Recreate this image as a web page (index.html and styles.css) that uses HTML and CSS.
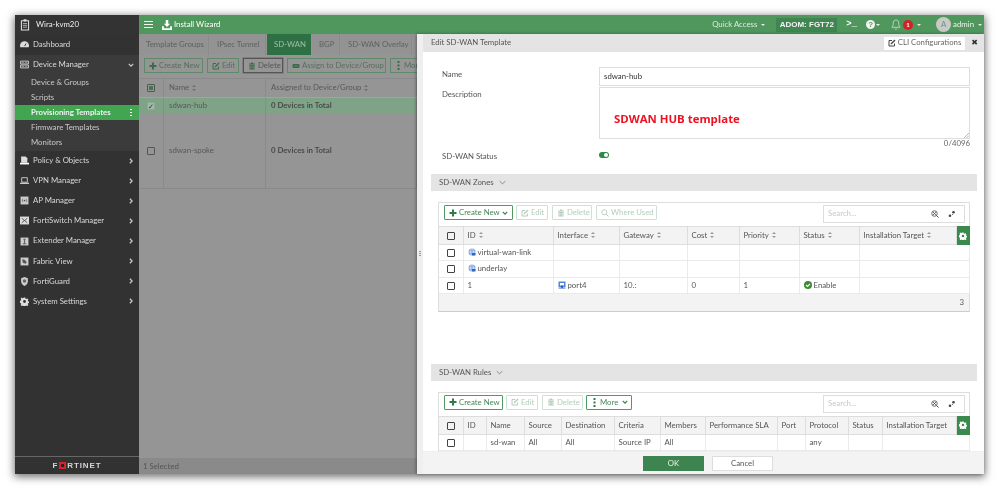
FILE: index.html
```html
<!DOCTYPE html>
<html lang="en">
<head>
<meta charset="utf-8">
<title>Edit SD-WAN Template</title>
<link rel="stylesheet" href="styles.css">
</head>
<body>
<svg class="defs" width="0" height="0" aria-hidden="true">
  <symbol id="gear" viewBox="0 0 16 16"><path fill="currentColor" fill-rule="evenodd" d="M6.600 1h2.800l.4 2 1.300.6 1.800-1.100 2 2-1.100 1.800.6 1.300 2 .4v2.800l-2 .4-.6 1.300 1.100 1.800-2 2-1.800-1.100-1.300.6-.4 2H6.600l-.4-2-1.300-.6-1.800 1.100-2-2 1.100-1.800-.6-1.300-2-.4V6.600l2-.4.6-1.300-1.100-1.800 2-2 1.800 1.100 1.300-.6zM8 5.500a2.500 2.500 0 1 0 0 5 2.500 2.500 0 0 0 0-5z"/></symbol>
  <symbol id="edit" viewBox="0 0 16 16"><path fill="none" stroke="currentColor" stroke-width="2" d="M13 9v5H2V3h6"/><path fill="currentColor" d="M6 8l7-7 2 2-7 7-3 1z"/></symbol>
  <symbol id="trash" viewBox="0 0 16 16"><path fill="currentColor" fill-rule="evenodd" d="M2 3h4V1h4v2h4v2H2zM3 6h10v9H3zm2 2v5h1V8zm2.500 0v5h1V8zM10 8v5h1V8z"/></symbol>
  <symbol id="plus" viewBox="0 0 16 16"><path fill="currentColor" d="M6 1h4v5h5v4h-5v5H6v-5H1V6h5z"/></symbol>
  <symbol id="search" viewBox="0 0 16 16"><circle cx="6.500" cy="6.500" r="5" fill="none" stroke="currentColor" stroke-width="1.800"/><path stroke="currentColor" stroke-width="2" d="M10 10l5 5"/></symbol>
  <symbol id="searchx" viewBox="0 0 16 16"><circle cx="7" cy="7" r="5.500" fill="none" stroke="currentColor" stroke-width="1.600"/><path stroke="currentColor" stroke-width="2" d="M11 11l4 4M4.500 4.500l5 5M9.500 4.500l-5 5"/></symbol>
  <symbol id="dots" viewBox="0 0 16 16"><circle cx="11" cy="4.500" r="2.600" fill="currentColor"/><circle cx="4" cy="11.500" r="2.600" fill="currentColor"/><circle cx="9" cy="9" r="1" fill="currentColor"/></symbol>
  <symbol id="globe" viewBox="0 0 16 16"><circle cx="8" cy="8" r="7" fill="#7fa6e0"/><path fill="none" stroke="#fff" d="M1 8h14M8 1c-4 4-4 10 0 14M8 1c4 4 4 10 0 14"/><path fill="#2d66c4" d="M8 10h7v5H8z"/></symbol>
  <symbol id="port" viewBox="0 0 16 16"><rect x="1" y="1" width="14" height="12" fill="#4f86d9"/><path fill="#fff" d="M4 4h8v5H4z"/><path fill="#2d66c4" d="M6 9h4v6H6zM1 14h14v1H1z"/></symbol>
  <symbol id="check" viewBox="0 0 16 16"><circle cx="8" cy="8" r="8" fill="#3f8a33"/><path fill="none" stroke="#fff" stroke-width="2.400" d="M4 8l3 3 5-5"/></symbol>
  <symbol id="pill" viewBox="0 0 16 16"><rect x="1" y="4" width="14" height="8" rx="2" fill="currentColor"/><path stroke="#959595" d="M4 8h8"/></symbol>
  <symbol id="kebab" viewBox="0 0 7 9"><path fill="currentColor" d="M2.500 0h2v2h-2zM2.500 3.500h2v2h-2zM2.500 7h2v2h-2z"/></symbol>
  <symbol id="right" viewBox="0 0 8 8"><path fill="none" stroke="#ccc" stroke-width="1.600" d="M2.500 1l3 3-3 3"/></symbol>
  <symbol id="down" viewBox="0 0 8 8"><path fill="none" stroke="currentColor" stroke-width="1.600" d="M1 2.500l3 3 3-3"/></symbol>
</svg>

<div class="window">
  <aside class="sidebar">
    <div class="adom-head">
      <svg class="doc" viewBox="0 0 14 16"><path fill="none" stroke="#ddd" stroke-width="1.500" d="M2 2h10v13H2z"/><path stroke="#ddd" d="M4 6h6M4 8.500h6M4 11h6"/><path fill="#ddd" d="M5 0h4v3H5z"/></svg>
      <span>Wira-kvm20</span>
    </div>
    <nav class="nav">
      <div class="nav-item">
        <svg class="ico" viewBox="0 0 16 16"><path fill="#ddd" d="M8 2a8 8 0 0 0-8 8c0 2 1 3 1 3h14s1-1 1-3a8 8 0 0 0-8-8z"/><path stroke="#333" stroke-width="1.600" d="M8 11l3-5"/></svg>
        <span>Dashboard</span>
      </div>
      <div class="group">
        <div class="nav-item">
          <svg class="ico" viewBox="0 0 16 16"><path fill="none" stroke="#ddd" stroke-width="1.500" d="M1 2h14v5H1zM1 9h14v5H1z"/><path fill="#ddd" d="M3 4h4v1H3zM9 4h4v1H9zM3 11h4v1H3zM9 11h4v1H9z"/></svg>
          <span>Device Manager</span>
          <svg class="chev down"><use href="#down"/></svg>
        </div>
        <div class="sub">Device &amp; Groups</div>
        <div class="sub">Scripts</div>
        <div class="sub active"><span>Provisioning Templates</span><i class="kebab"></i></div>
        <div class="sub">Firmware Templates</div>
        <div class="sub">Monitors</div>
      </div>
      <div class="nav-item">
        <svg class="ico" viewBox="0 0 16 16"><path fill="#ddd" d="M2 1h8l3 3v8H2z"/><path fill="#fff" d="M0 12h16v3H0z"/></svg>
        <span>Policy &amp; Objects</span>
        <svg class="chev"><use href="#right"/></svg>
      </div>
      <div class="nav-item">
        <svg class="ico" viewBox="0 0 16 16"><path fill="none" stroke="#ddd" stroke-width="1.500" d="M3 3h10v8H3z"/><path fill="#ddd" d="M0 12h16v2H0z"/></svg>
        <span>VPN Manager</span>
        <svg class="chev"><use href="#right"/></svg>
      </div>
      <div class="nav-item">
        <svg class="ico" viewBox="0 0 16 16"><rect x="1" y="1" width="14" height="14" fill="#ccc"/><path fill="none" stroke="#444" d="M5 5c-1 2-1 4 0 6M11 5c1 2 1 4 0 6"/><circle cx="8" cy="8" r="1.500" fill="#444"/></svg>
        <span>AP Manager</span>
        <svg class="chev"><use href="#right"/></svg>
      </div>
      <div class="nav-item">
        <svg class="ico" viewBox="0 0 16 16"><rect x="0" y="1" width="16" height="14" fill="#ddd"/><path stroke="#444" stroke-width="1.500" d="M3 4l10 8M13 4L3 12"/></svg>
        <span>FortiSwitch Manager</span>
        <svg class="chev"><use href="#right"/></svg>
      </div>
      <div class="nav-item">
        <svg class="ico" viewBox="0 0 16 16"><rect x="1" y="1" width="14" height="14" fill="#ccc"/><path fill="#666" d="M6 3h4v2H6zM7 5h2v6H7zM5 11h6v2H5z"/></svg>
        <span>Extender Manager</span>
        <svg class="chev"><use href="#right"/></svg>
      </div>
      <div class="nav-item">
        <svg class="ico" viewBox="0 0 16 16"><rect x="1" y="1" width="14" height="14" fill="#ccc"/><path fill="#555" d="M4 4l4 1 4 4-2 3-5-2z"/></svg>
        <span>Fabric View</span>
        <svg class="chev"><use href="#right"/></svg>
      </div>
      <div class="nav-item">
        <svg class="ico" viewBox="0 0 16 16"><path fill="#ccc" d="M8 0l6 2v6c0 4-3 6-6 8-3-2-6-4-6-8V2z"/><circle cx="8" cy="7" r="3" fill="#666"/></svg>
        <span>FortiGuard</span>
        <svg class="chev"><use href="#right"/></svg>
      </div>
      <div class="nav-item">
        <svg class="ico gearico"><use href="#gear"/></svg>
        <span>System Settings</span>
        <svg class="chev"><use href="#right"/></svg>
      </div>
    </nav>
    <div class="brand"><span>F</span><b class="brand-o"></b><span>RTINET</span></div>
  </aside>

  <div class="content">
    <header class="topbar">
      <span class="burger"><i></i><i></i><i></i></span>
      <span class="wizard">
        <svg viewBox="0 0 16 16"><path fill="#fff" d="M6 0h4v6h3L8 11 3 6h3zM0 10h3v3h10v-3h3v6H0z"/></svg>
        Install Wizard
      </span>
      <span class="top-right">
        <span class="quick">Quick Access <i class="caret"></i></span>
        <span class="adom">ADOM: FGT72</span>
        <span class="prompt">&gt;_</span>
        <span class="help"><b>?</b><i class="caret"></i></span>
        <span class="bell">
          <svg viewBox="0 0 14 16"><path fill="none" stroke="#e8f0e8" d="M7 1.500c-3 0-4 2-4 5 0 3-1 4-2 5.500h12c-1-1.500-2-2.500-2-5.500 0-3-1-5-4-5zM5.500 14c.5 1.300 2.500 1.300 3 0"/></svg>
          <b class="badge">1</b><i class="caret"></i>
        </span>
        <span class="user"><b class="avatar">A</b>admin<i class="caret"></i></span>
      </span>
    </header>

    <div class="tabs">
      <span class="tab">Template Groups</span>
      <span class="tab">IPsec Tunnel</span>
      <span class="tab on">SD-WAN</span>
      <span class="tab">BGP</span>
      <span class="tab">SD-WAN Overlay</span>
    </div>
    <div class="main-tools">
      <span class="dbtn"><svg><use href="#plus"/></svg>Create New</span>
      <span class="dbtn"><svg><use href="#edit"/></svg>Edit</span>
      <span class="dbtn dark"><svg><use href="#trash"/></svg>Delete</span>
      <span class="dbtn"><svg><use href="#pill"/></svg>Assign to Device/Group</span>
      <span class="dbtn"><svg class="vdots"><use href="#kebab"/></svg>More</span>
    </div>
    <div class="main-grid">
      <div class="mrow mhead">
        <span class="mc"><i class="cb sel"></i></span>
        <span class="mc">Name<i class="sort"></i></span>
        <span class="mc">Assigned to Device/Group<i class="sort"></i></span>
      </div>
      <div class="mrow hub">
        <span class="mc"><i class="cb tick">✓</i></span>
        <span class="mc">sdwan-hub</span>
        <span class="mc strong">0 Devices in Total</span>
      </div>
      <div class="mrow spoke">
        <span class="mc"><i class="cb"></i></span>
        <span class="mc">sdwan-spoke</span>
        <span class="mc strong">0 Devices in Total</span>
      </div>
    </div>
    <div class="main-foot">1 Selected</div>

    <section class="panel">
      <div class="splitter"><i></i></div>
      <div class="panel-in">
        <div class="panel-head">
          <span>Edit SD-WAN Template</span>
          <span class="cli"><svg><use href="#edit"/></svg>CLI Configurations</span>
          <span class="close">✖</span>
        </div>
        <div class="panel-body">
          <div class="field f-name"><label>Name</label><div class="input">sdwan-hub</div></div>
          <div class="field f-desc"><label>Description</label><div class="input area"><span class="hub-note">SDWAN HUB template</span><svg class="grip" viewBox="0 0 6 6"><path stroke="#aaa" d="M0 6l6-6M3 6l3-3"/></svg></div></div>
          <div class="count">0/4096</div>
          <div class="field f-status"><label>SD-WAN Status</label><i class="toggle"></i></div>

          <div class="sect">SD-WAN Zones <svg viewBox="0 0 10 6"><path fill="none" stroke="#666" d="M1 1l4 4 4-4"/></svg></div>
          <div class="tbox zones">
            <div class="tbar">
              <span class="btn"><svg class="gr"><use href="#plus"/></svg>Create New <svg class="cv"><use href="#down"/></svg></span>
              <span class="btn off"><svg><use href="#edit"/></svg>Edit</span>
              <span class="btn off"><svg><use href="#trash"/></svg>Delete</span>
              <span class="btn off"><svg><use href="#search"/></svg>Where Used</span>
              <span class="sbox"><span>Search...</span><svg><use href="#searchx"/></svg><svg><use href="#dots"/></svg></span>
            </div>
            <table class="t tz">
              <colgroup><col class="c1"><col class="c2"><col class="c3"><col class="c4"><col class="c5"><col class="c6"><col class="c7"><col class="c8"><col class="c9"></colgroup>
              <thead><tr><th><i class="cb"></i></th><th>ID<i class="sort"></i></th><th>Interface<i class="sort"></i></th><th>Gateway<i class="sort"></i></th><th>Cost<i class="sort"></i></th><th>Priority<i class="sort"></i></th><th>Status<i class="sort"></i></th><th>Installation Target<i class="sort"></i></th><th class="gearcell"><svg><use href="#gear"/></svg></th></tr></thead>
              <tbody>
                <tr><td><i class="cb"></i></td><td><svg class="ri"><use href="#globe"/></svg>virtual-wan-link</td><td></td><td></td><td></td><td></td><td></td><td colspan="2"></td></tr>
                <tr><td><i class="cb"></i></td><td><svg class="ri"><use href="#globe"/></svg>underlay</td><td></td><td></td><td></td><td></td><td></td><td colspan="2"></td></tr>
                <tr><td><i class="cb"></i></td><td>1</td><td><svg class="ri"><use href="#port"/></svg>port4</td><td>10.:</td><td>0</td><td>1</td><td><svg class="ri"><use href="#check"/></svg>Enable</td><td colspan="2"></td></tr>
              </tbody>
            </table>
            <div class="tfoot">3</div>
          </div>

          <div class="sect rules-sect">SD-WAN Rules <svg viewBox="0 0 10 6"><path fill="none" stroke="#666" d="M1 1l4 4 4-4"/></svg></div>
          <div class="tbox rules">
            <div class="tbar">
              <span class="btn"><svg class="gr"><use href="#plus"/></svg>Create New</span>
              <span class="btn off"><svg><use href="#edit"/></svg>Edit</span>
              <span class="btn off"><svg><use href="#trash"/></svg>Delete</span>
              <span class="btn"><svg class="vdots"><use href="#kebab"/></svg>More <svg class="cv"><use href="#down"/></svg></span>
              <span class="sbox"><span>Search...</span><svg><use href="#searchx"/></svg><svg><use href="#dots"/></svg></span>
            </div>
            <table class="t tr">
              <colgroup><col class="r1"><col class="r2"><col class="r3"><col class="r4"><col class="r5"><col class="r6"><col class="r7"><col class="r8"><col class="r9"><col class="r10"><col class="r11"><col class="r12"><col class="r13"></colgroup>
              <thead><tr><th><i class="cb"></i></th><th>ID</th><th>Name</th><th>Source</th><th>Destination</th><th>Criteria</th><th>Members</th><th>Performance SLA</th><th>Port</th><th>Protocol</th><th>Status</th><th>Installation Target</th><th class="gearcell"><svg><use href="#gear"/></svg></th></tr></thead>
              <tbody>
                <tr><td><i class="cb"></i></td><td></td><td>sd-wan</td><td>All</td><td>All</td><td>Source IP</td><td>All</td><td></td><td></td><td>any</td><td></td><td colspan="2"></td></tr>
              </tbody>
            </table>
          </div>
        </div>
        <div class="panel-foot">
          <span class="ok">OK</span>
          <span class="cancel">Cancel</span>
        </div>
      </div>
    </section>
  </div>
</div>
</body>
</html>
```
FILE: styles.css
```css
* { box-sizing: border-box; }
html, body { margin: 0; height: 100%; }
body {
  background: #fff;
  padding: 15px 0 0 15px;
  font: 7.8px/1.2 Lato, "Open Sans", sans-serif;
  color: #444;
  overflow: hidden;
}
.defs { position: absolute; }
i, b { font-style: normal; }

.window {
  width: 969px;
  height: 459px;
  display: flex;
  box-shadow: 0 2px 8px 1px rgba(0,0,0,.55);
  filter: blur(.35px);
}

/* sidebar */
.sidebar { width: 124px; background: #323232; color: #d9d9d9; display: flex; flex-direction: column; }
.adom-head { height: 19px; padding-left: 5px; display: flex; align-items: center; gap: 6px; color: #eee; background: #333; }
.doc { width: 10px; height: 12px; }
.nav { flex: 1; padding-top: .5px; }
.nav-item { height: 20.1px; padding-left: 5px; display: flex; align-items: center; gap: 4px; position: relative; }
.ico { width: 9px; height: 9px; flex: none; color: #ddd; }
.chev { width: 6px; height: 6px; position: absolute; right: 5px; top: 7px; }
.chev.down { color: #ccc; }
.group { background: #3b3b3b; padding-bottom: .5px; }
.sub { height: 15.1px; padding-left: 16px; display: flex; align-items: center; color: #c9c9c9; }
.sub.active { background: #41a551; color: #f2f2f2; font-weight: 700; justify-content: space-between; padding-right: 7px; }
.kebab { width: 2px; height: 8px; background: radial-gradient(circle, #fff 1px, transparent 1px) 0 0 / 2px 3px; }
.brand { height: 18px; border-top: 1px solid #666; margin-top: -1px; display: flex; align-items: center; justify-content: center; color: #d5d5d5; font: 700 8px/1 "Liberation Sans", sans-serif; letter-spacing: .9px; gap: 1px; }
.brand-o { width: 7px; height: 7px; background: #d3262c; border: 2px solid #d3262c; box-shadow: inset 0 0 0 2px #222; }

/* main */
.content { flex: 1; display: flex; flex-direction: column; background: #959595; position: relative; min-width: 0; }
.topbar { height: 19px; flex: none; background: #4f975c; display: flex; align-items: center; color: #eef4ef; padding-left: 5px; }
.burger { width: 9px; display: flex; flex-direction: column; gap: 1.500px; margin-right: 9px; }
.burger i { height: 1.500px; background: #f4f4f4; }
.wizard { display: flex; align-items: center; gap: 2px; color: #fff; }
.wizard svg { width: 10px; height: 10px; }
.top-right { margin-left: auto; display: flex; align-items: center; height: 100%; }
.quick { display: flex; align-items: center; gap: 4px; margin-right: 11px; color: #dfeadf; }
.caret { width: 0; height: 0; display: inline-block; border: 2.500px solid transparent; border-top-color: #eee; border-bottom-width: 0; }
.adom { height: 14px; width: 61px; background: #3f8650; color: #f4f4f4; font: 700 8px/14px "Liberation Sans", sans-serif; text-align: center; margin-right: 9px; }
.prompt { color: #fff; font: 700 9px/1 "Liberation Mono", monospace; margin-right: 9px; }
.help { display: flex; align-items: center; gap: 1px; margin-right: 11px; }
.help b { width: 9px; height: 9px; border-radius: 50%; background: #f3f3f3; color: #4f975c; font: 700 8px/9px "Liberation Sans", sans-serif; text-align: center; }
.bell { display: flex; align-items: center; gap: 2px; margin-right: 15px; }
.bell svg { width: 10px; height: 11px; }
.badge { width: 10px; height: 10px; border-radius: 50%; background: #d42027; color: #fff; font: 700 6px/10px Lato, sans-serif; text-align: center; margin-right: 2px; }
.user { display: flex; align-items: center; gap: 2px; margin-right: 2px; color: #eef4ef; }
.user .caret { margin-left: 2px; }
.avatar { width: 15px; height: 15px; border-radius: 50%; background: #c9c9c9; color: #5c9f68; font-weight: 400; line-height: 15px; text-align: center; }

.tabs { height: 21px; flex: none; display: flex; gap: 1px; color: #606060; }
.tab { padding: 0 7px; line-height: 21px; background: #939393; border-right: 1px solid #8a8a8a; white-space: nowrap; }
.tab:nth-child(1) { width: 70px; }
.tab:nth-child(2) { width: 56px; }
.tab:nth-child(3) { width: 44px; background: #2f6f44; color: #9ec0a6; border: 0; }
.tab:nth-child(4) { width: 28px; }
.tab:nth-child(5) { width: 71px; }
.main-tools { height: 24px; flex: none; padding: 3px 5px; display: flex; gap: 4px; border-bottom: 1px solid #8a8a8a; }
.dbtn { height: 15px; padding: 0 4px; border: 1px solid #5f8a69; display: flex; align-items: center; gap: 2px; color: #55705c; white-space: nowrap; }
.dbtn svg { width: 8px; height: 8px; flex: none; color: #3f6a4b; }
.dbtn:nth-child(1) { width: 59px; }
.dbtn:nth-child(2) { width: 32px; }
.dbtn:nth-child(3) { width: 40px; }
.dbtn:nth-child(4) { width: 99px; }
.dbtn.dark { border-color: #555; box-shadow: 0 0 0 .5px #666; color: #555; }
.main-grid { color: #585858; width: 278px; }
.mrow { display: grid; grid-template-columns: 25px 102px 1fr; width: 100%; }
.mc { display: flex; align-items: center; padding-left: 5px; border-right: 1px solid #8a8a8a; white-space: nowrap; }
.mhead { height: 18px; }
.hub { height: 16px; background: #7fa387; border-top: 1px solid #8fb096; }
.spoke { height: 76px; border-bottom: 1px solid #8a8a8a; }
.spoke .mc { padding-top: 1px; }
.strong { font-weight: 700; color: #4a4a4a; }
.main-foot { margin-top: auto; height: 16px; line-height: 16px; padding-left: 4px; background: #8a8a8a; color: #555; }
.mrow > .mc:first-child { justify-content: center; padding: 0; }

.cb { width: 8px; height: 8px; border: 1px solid #444; border-radius: 1px; display: inline-block; background: transparent; line-height: 6px; vertical-align: middle; }
.mrow .cb { border-color: #555; }
.cb.sel { box-shadow: inset 0 0 0 1px #959595, inset 0 0 0 3px #3f7a50; }
.cb.tick { background: #a0b8a6; border-color: #8fa895; color: #333; font-size: 7px; text-align: center; }
.sort { display: inline-block; width: 4px; height: 6px; margin-left: 3px; vertical-align: -.5px; position: relative; flex: none; }
.sort::before, .sort::after { content: ""; position: absolute; left: 0; border: 2px solid transparent; }
.sort::before { top: 0; border-bottom-color: #999; border-top-width: 0; }
.sort::after { bottom: 0; border-top-color: #999; border-bottom-width: 0; }
.mhead .sort::before { border-bottom-color: #6d6d6d; }
.mhead .sort::after { border-top-color: #6d6d6d; }

/* slide-in panel */
.panel { position: absolute; left: 278px; top: 19px; right: 0; bottom: 0; display: flex; background: #eee; box-shadow: -1px 0 3px rgba(0,0,0,.35); }
.splitter { width: 6px; flex: none; display: flex; align-items: center; justify-content: center; background: #efefef; }
.splitter i { width: 2px; height: 6px; background: repeating-linear-gradient(#999 0 1px, transparent 1px 2px); }
.panel-in { flex: 1; min-width: 0; display: flex; flex-direction: column; background: #fff; }
.panel-head { height: 18px; flex: none; background: #e4e4e4; display: flex; align-items: center; padding-left: 8px; color: #555; }
.cli { margin-left: auto; width: 81px; height: 13px; background: #fff; display: flex; align-items: center; justify-content: center; gap: 2px; color: #666; white-space: nowrap; }
.cli svg { width: 8px; height: 8px; color: #444; flex: none; }
.close { width: 19px; text-align: center; color: #333; font: 700 8px/1 "DejaVu Sans", sans-serif; }
.panel-body { flex: 1; min-height: 0; overflow: hidden; padding: 15px 7px 0 8px; }
.field { display: flex; padding-left: 11px; color: #555; }
.field label { width: 157px; flex: none; }
.f-name { height: 20px; }
.f-name label { padding-top: 3px; }
.input { width: 371px; height: 19px; border: 1px solid #ddd; padding: 0 4px; line-height: 17px; color: #333; background: #fff; }
.f-desc label { padding-top: 3px; }
.input.area { height: 52px; position: relative; }
.hub-note { position: absolute; left: 14px; top: 24px; color: #ee1122; font: 700 11.400px/1.2 "Open Sans", sans-serif; }
.grip { position: absolute; right: 0; bottom: 0; width: 5px; height: 5px; }
.count { width: 539px; text-align: right; height: 9px; line-height: 8px; color: #666; }
.f-status { margin-top: 2px; height: 23px; }
.f-status label { padding-top: 2px; }
.toggle { width: 10px; height: 6px; margin-top: 2px; border-radius: 3px; background: #2f8a47; position: relative; }
.toggle::after { content: ""; position: absolute; right: 1px; top: 1px; width: 4px; height: 4px; border-radius: 50%; background: #fff; }
.sect { margin-top: 1px; height: 17px; background: #e4e4e4; padding-left: 8px; line-height: 17px; color: #555; display: flex; align-items: center; gap: 5px; }
.sect svg { width: 7px; height: 5px; }
.rules-sect { margin-top: 52px; }
.tbox { margin: 11px 0 0 7px; width: 532px; border: 1px solid #ddd; border-bottom: 1px solid #ccc; }
.tbar { height: 23px; display: flex; align-items: flex-start; gap: 4px; padding: 2px 0 0 5px; }
.btn { height: 15px; padding: 0 4px; border: 1px solid #4f9a62; border-radius: 1px; display: flex; align-items: center; gap: 2px; color: #47875a; white-space: nowrap; }
.zones .btn:nth-child(1) { width: 69px; }
.zones .btn:nth-child(2) { width: 32px; margin-left: -1px; }
.zones .btn:nth-child(3) { width: 40px; }
.zones .btn:nth-child(4) { width: 61px; }
.rules .btn:nth-child(1) { width: 59px; margin-right: -1px; }
.rules .btn:nth-child(2) { width: 32px; }
.rules .btn:nth-child(3) { width: 41px; }
.rules .btn:nth-child(4) { width: 46px; margin-left: -1px; padding-right: 3px; }
.btn svg { width: 8px; height: 8px; flex: none; }
.btn .gr { color: #2f7d46; }
.btn .cv { width: 6px; height: 6px; margin-left: auto; color: #3a7f4c; }
.btn.off { border-color: #cfe1d4; color: #b5cdbb; }
.btn .vdots, .dbtn .vdots { width: 7px; height: 9px; color: #2f7d46; }
.dbtn .vdots { color: #3f6a4b; }
.sbox { margin-left: auto; margin-right: 4px; width: 142px; height: 18px; border: 1px solid #ddd; display: flex; align-items: center; padding: 0 4px; gap: 9px; color: #c8c8c8; }
.sbox span { flex: 1; }
.sbox svg { width: 8px; height: 8px; color: #444; flex: none; }
.sbox svg:last-child { margin-right: 4px; }
.t { table-layout: fixed; border-collapse: collapse; width: 530px; }
.t th { height: 18px; background: #f3f3f3; border: 1px solid #ddd; border-width: 1px 1px 1px 0; font-weight: 400; text-align: left; color: #555; padding: 0 4px; white-space: nowrap; overflow: hidden; }
.t td { height: 16.300px; border: 1px solid #eaeaea; border-width: 0 1px 1px 0; padding: 0 4px; color: #555; white-space: nowrap; overflow: hidden; }
.t th:first-child, .t td:first-child { text-align: center; padding: 0; }
.t tbody .ri { width: 8px; height: 8px; margin-right: 2px; vertical-align: -1px; }
.t .gearcell { background: #3b8a4d; color: #fff; padding: 0; text-align: center; border-color: #3b8a4d; }
.gearcell svg { width: 8px; height: 8px; display: block; margin: auto; }
.c1 { width: 24px; } .c2 { width: 90px; } .c3 { width: 66px; } .c4 { width: 68px; } .c5 { width: 52px; }
.c6 { width: 60px; } .c7 { width: 60px; } .c8 { width: 97px; } .c9 { width: 13px; }
.r1 { width: 24px; } .r2 { width: 23px; } .r3 { width: 38px; } .r4 { width: 37px; } .r5 { width: 53px; } .r6 { width: 46px; }
.r7 { width: 45px; } .r8 { width: 72px; } .r9 { width: 28px; } .r10 { width: 43px; } .r11 { width: 34px; } .r12 { width: 74px; } .r13 { width: 13px; }
.tfoot { height: 17px; line-height: 17px; text-align: right; background: #f3f3f3; padding-right: 5px; color: #555; }
.panel-foot { height: 23px; flex: none; background: #f3f3f3; display: flex; justify-content: center; align-items: center; gap: 8px; padding-left: 9px; border-top: 1px solid #eee; }
.ok, .cancel { width: 61px; height: 15px; line-height: 13px; text-align: center; border: 1px solid #3e8450; }
.ok { background: #3e8450; color: #e8f3ea; }
.cancel { background: #fff; border-color: #ddd; color: #555; }
```
